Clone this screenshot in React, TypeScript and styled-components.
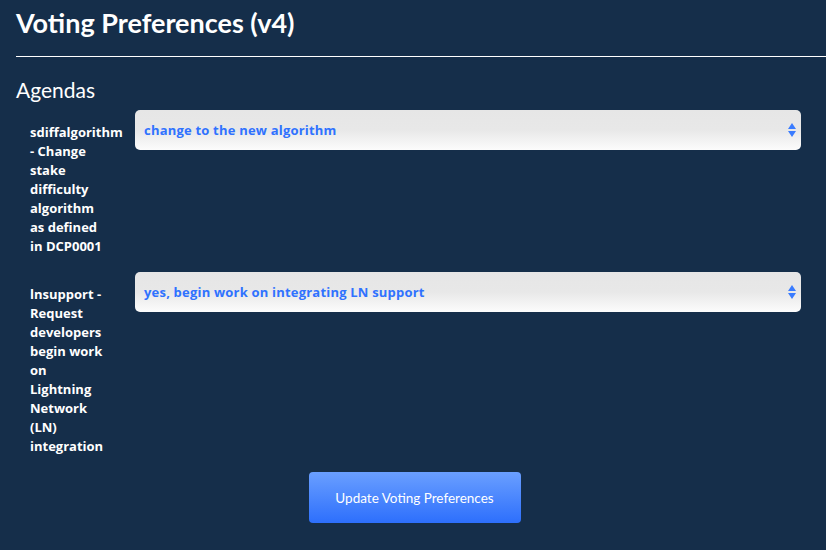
import React from "react";
import styled, { createGlobalStyle } from "styled-components";

const Global = createGlobalStyle`
  html, body { margin: 0; padding: 0; background: #152e4a; }
  body { font-family: Lato, "Open Sans", sans-serif; color: #fff; }
`;

const Page = styled.div`
  width: 826px;
  height: 550px;
  background: #152e4a;
  padding: 0 0 0 16px;
  box-sizing: border-box;
  overflow: hidden;
`;

const Title = styled.h1`
  margin: 0;
  padding-top: 6px;
  font-size: 27px;
  font-weight: 700;
  line-height: 34px;
  height: 50px;
`;

const Rule = styled.hr`
  margin: 0;
  border: 0;
  border-top: 1px solid #ffffff;
  height: 0;
`;

const Section = styled.h2`
  margin: 0;
  padding-top: 19px;
  font-size: 21px;
  font-weight: 400;
  line-height: 27px;
  height: 34px;
`;

const Row = styled.div`
  display: flex;
  align-items: flex-start;
  margin-right: 25px;
  margin-bottom: 16px;
`;

const Label = styled.div`
  width: 119px;
  padding: 13px 0 0 14px;
  box-sizing: border-box;
  font-family: "Open Sans", sans-serif;
  font-size: 13px;
  font-weight: 700;
  line-height: 19px;
  flex-shrink: 0;
  white-space: nowrap;
`;

const SelectBox = styled.div`
  flex: 1;
  height: 40px;
  border-radius: 5px;
  background: linear-gradient(to bottom, #e6e6e6 0%, #e8e8e8 50%, #fcfcfc 100%);
  display: flex;
  align-items: center;
  justify-content: space-between;
  padding: 0 5px 0 9px;
  box-sizing: border-box;
  color: #2f72ff;
  font-family: "Open Sans", sans-serif;
  font-size: 13px;
  font-weight: 700;
  letter-spacing: 0.2px;
`;

const Arrows = styled.svg`
  width: 8px;
  height: 14px;
`;

const ButtonRow = styled.div`
  display: flex;
  justify-content: center;
  padding-right: 13px;
`;

const Button = styled.button`
  width: 212px;
  height: 51px;
  border: 0;
  border-radius: 4px;
  background: linear-gradient(to bottom, #6a9fff 0%, #2d6ffc 100%);
  color: #fff;
  font-family: Lato, "Open Sans", sans-serif;
  font-size: 13.5px;
  font-weight: 400;
`;

const agendas = [
  {
    label: ["sdiffalgorithm", "- Change", "stake", "difficulty", "algorithm", "as defined", "in DCP0001"],
    value: "change to the new algorithm",
  },
  {
    label: ["lnsupport -", "Request", "developers", "begin work", "on", "Lightning", "Network", "(LN)", "integration"],
    value: "yes, begin work on integrating LN support",
  },
];

export default function App() {
  return (
    <Page>
      <Global />
      <Title>Voting Preferences (v4)</Title>
      <Rule />
      <Section>Agendas</Section>
      {agendas.map((a) => (
        <Row key={a.value}>
          <Label>
            {a.label.map((l, i) => (
              <div key={i}>{l}</div>
            ))}
          </Label>
          <SelectBox>
            <span>{a.value}</span>
            <Arrows viewBox="0 0 8 14">
              <path d="M4 0 L8 6 L0 6 Z M0 8 L8 8 L4 14 Z" fill="#3a7cff" />
            </Arrows>
          </SelectBox>
        </Row>
      ))}
      <ButtonRow>
        <Button>Update Voting Preferences</Button>
      </ButtonRow>
    </Page>
  );
}
